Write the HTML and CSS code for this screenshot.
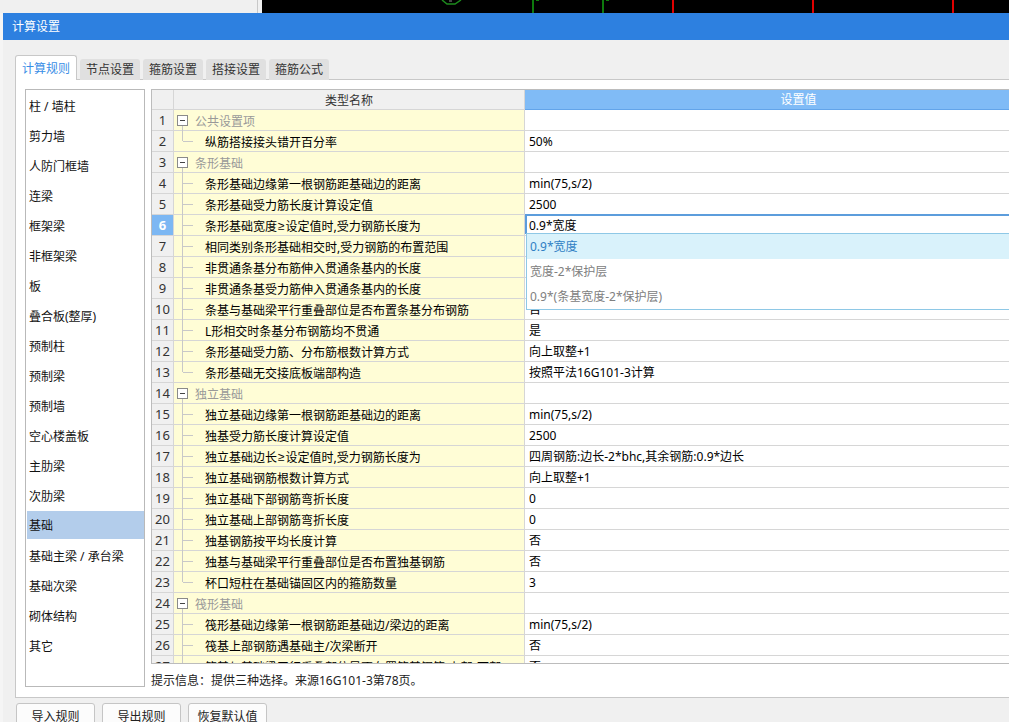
FILE: index.html
```html
<!DOCTYPE html>
<html lang="zh-CN">
<head>
<meta charset="utf-8">
<title>计算设置</title>
<link rel="stylesheet" href="styles.css">
</head>
<body>
<div class="topstrip">
  <div class="ts-left"></div>
  <div class="ts-gap"></div>
  <div class="ts-canvas">
    <svg width="747" height="13" viewBox="0 0 747 13">
      <polyline points="180,0 185,4 193,4 199,0" fill="none" stroke="#1d8a1d" stroke-width="1.5"/>
      <rect x="187" y="0" width="3" height="2" fill="#444"/>
      <rect x="270" y="0" width="2" height="13" fill="#0d7a0d"/>
      <rect x="274" y="0" width="3" height="1" fill="#0d7a0d"/>
      <rect x="340" y="0" width="2" height="13" fill="#0d7a0d"/>
      <rect x="344" y="0" width="3" height="1" fill="#0d7a0d"/>
      <rect x="410" y="0" width="2" height="13" fill="#e00000"/>
      <rect x="550" y="0" width="2" height="13" fill="#e00000"/>
      <rect x="690" y="0" width="2" height="13" fill="#e00000"/>
    </svg>
  </div>
</div>
<div class="main">
  <div class="leftstrip"></div>
  <div class="dialog">
    <div class="titlebar">计算设置</div>
    <div class="dbody">
      <div class="tabs">
        <div class="tab active">计算规则</div>
        <div class="tab">节点设置</div>
        <div class="tab">箍筋设置</div>
        <div class="tab">搭接设置</div>
        <div class="tab">箍筋公式</div>
      </div>
      <div class="panel">
        <ul class="cat-list">
          <li>柱 / 墙柱</li>
          <li>剪力墙</li>
          <li>人防门框墙</li>
          <li>连梁</li>
          <li>框架梁</li>
          <li>非框架梁</li>
          <li>板</li>
          <li>叠合板(整厚)</li>
          <li>预制柱</li>
          <li>预制梁</li>
          <li>预制墙</li>
          <li>空心楼盖板</li>
          <li>主肋梁</li>
          <li>次肋梁</li>
          <li class="sel">基础</li>
          <li>基础主梁 / 承台梁</li>
          <li>基础次梁</li>
          <li>砌体结构</li>
          <li>其它</li>
        </ul>
        <div class="right">
          <div class="grid">
            <div class="row head"><div class="num"></div><div class="name">类型名称</div><div class="val">设置值</div></div>
            <div class="row"><div class="num">1</div><div class="name g"><span class="box"></span>公共设置项</div><div class="val"></div></div>
            <div class="row"><div class="num">2</div><div class="name c last">纵筋搭接接头错开百分率</div><div class="val">50%</div></div>
            <div class="row"><div class="num">3</div><div class="name g"><span class="box"></span>条形基础</div><div class="val"></div></div>
            <div class="row"><div class="num">4</div><div class="name c">条形基础边缘第一根钢筋距基础边的距离</div><div class="val">min(75,s/2)</div></div>
            <div class="row"><div class="num">5</div><div class="name c">条形基础受力筋长度计算设定值</div><div class="val">2500</div></div>
            <div class="row"><div class="num cur">6</div><div class="name c">条形基础宽度<span class="ge">≥</span>设定值时,受力钢筋长度为</div><div class="val edit"><span class="editor"></span>0.9*宽度
              <div class="dropdown">
                <div class="opt hl">0.9*宽度</div>
                <div class="opt">宽度-2*保护层</div>
                <div class="opt">0.9*(条基宽度-2*保护层)</div>
              </div>
            </div></div>
            <div class="row"><div class="num">7</div><div class="name c">相同类别条形基础相交时,受力钢筋的布置范围</div><div class="val">十字相交</div></div>
            <div class="row"><div class="num">8</div><div class="name c">非贯通条基分布筋伸入贯通条基内的长度</div><div class="val">150</div></div>
            <div class="row"><div class="num">9</div><div class="name c">非贯通条基受力筋伸入贯通条基内的长度</div><div class="val">b/4</div></div>
            <div class="row"><div class="num">10</div><div class="name c">条基与基础梁平行重叠部位是否布置条基分布钢筋</div><div class="val">否</div></div>
            <div class="row"><div class="num">11</div><div class="name c">L形相交时条基分布钢筋均不贯通</div><div class="val">是</div></div>
            <div class="row"><div class="num">12</div><div class="name c">条形基础受力筋、分布筋根数计算方式</div><div class="val">向上取整+1</div></div>
            <div class="row"><div class="num">13</div><div class="name c last">条形基础无交接底板端部构造</div><div class="val">按照平法16G101-3计算</div></div>
            <div class="row"><div class="num">14</div><div class="name g"><span class="box"></span>独立基础</div><div class="val"></div></div>
            <div class="row"><div class="num">15</div><div class="name c">独立基础边缘第一根钢筋距基础边的距离</div><div class="val">min(75,s/2)</div></div>
            <div class="row"><div class="num">16</div><div class="name c">独基受力筋长度计算设定值</div><div class="val">2500</div></div>
            <div class="row"><div class="num">17</div><div class="name c">独立基础边长<span class="ge">≥</span>设定值时,受力钢筋长度为</div><div class="val">四周钢筋:边长-2*bhc,其余钢筋:0.9*边长</div></div>
            <div class="row"><div class="num">18</div><div class="name c">独立基础钢筋根数计算方式</div><div class="val">向上取整+1</div></div>
            <div class="row"><div class="num">19</div><div class="name c">独立基础下部钢筋弯折长度</div><div class="val">0</div></div>
            <div class="row"><div class="num">20</div><div class="name c">独立基础上部钢筋弯折长度</div><div class="val">0</div></div>
            <div class="row"><div class="num">21</div><div class="name c">独基钢筋按平均长度计算</div><div class="val">否</div></div>
            <div class="row"><div class="num">22</div><div class="name c">独基与基础梁平行重叠部位是否布置独基钢筋</div><div class="val">否</div></div>
            <div class="row"><div class="num">23</div><div class="name c last">杯口短柱在基础锚固区内的箍筋数量</div><div class="val">3</div></div>
            <div class="row"><div class="num">24</div><div class="name g"><span class="box"></span>筏形基础</div><div class="val"></div></div>
            <div class="row"><div class="num">25</div><div class="name c">筏形基础边缘第一根钢筋距基础边/梁边的距离</div><div class="val">min(75,s/2)</div></div>
            <div class="row"><div class="num">26</div><div class="name c">筏基上部钢筋遇基础主/次梁断开</div><div class="val">否</div></div>
            <div class="row"><div class="num">27</div><div class="name c">筏基与基础梁平行重叠部位是否布置筏基钢筋(上部/下部)</div><div class="val">否</div></div>
          </div>
          <div class="hint">提示信息：提供三种选择。来源16G101-3第78页。</div>
        </div>
      </div>
      <div class="buttons">
        <div class="btn">导入规则</div>
        <div class="btn">导出规则</div>
        <div class="btn">恢复默认值</div>
      </div>
    </div>
  </div>
</div>
</body>
</html>
```

FILE: styles.css
```css
* { box-sizing: border-box; margin: 0; padding: 0; }
html, body { width: 1009px; height: 722px; overflow: hidden; }
body {
  background: #f0f0f0;
  font-family: "Noto Sans", "Noto Sans CJK SC", sans-serif;
  font-size: 12px;
  color: #000;
}

/* background application strip */
.topstrip { display: flex; height: 13px; }
.ts-left { width: 258px; background: #f0f0f0; border-right: 1px solid #c8c8c8; }
.ts-gap { width: 4px; background: #f0f0f0; }
.ts-canvas { flex: 1; background: #000; overflow: hidden; }
.ts-canvas svg { display: block; }

.main { display: flex; height: 709px; }
.leftstrip { width: 3px; flex: none; background: #f5f5f5; }

/* dialog */
.dialog { flex: none; width: 1100px; background: #f0f0f0; }
.titlebar {
  height: 27px;
  background: #2d80e0;
  color: #fff;
  line-height: 27px;
  padding-left: 9px;
  font-size: 12px;
}
.dbody { padding: 15px 0 0 12px; }

.tabs { display: flex; align-items: flex-end; gap: 3px; height: 25px; }
.tab {
  width: 60px;
  height: 21px;
  background: #e0e0e0;
  border-radius: 3px 3px 0 0;
  text-align: center;
  line-height: 21px;
  color: #333;
}
.tab.active {
  width: 62px;
  height: 25px;
  background: #fff;
  border: 1px solid #c8c8c8;
  border-bottom: none;
  color: #3a8ee6;
  position: relative;
  z-index: 1;
  padding-top: 3px;
  line-height: 20px;
}

.panel {
  margin-top: -1px;
  height: 619px;
  border: 1px solid #c8c8c8;
  border-right: none;
  background: #fff;
  padding: 9px 0 0 9px;
  display: flex;
  gap: 6px;
  align-items: flex-start;
}

.cat-list {
  width: 120px;
  height: 598px;
  border: 1px solid #b9b9b9;
  list-style: none;
  background: #fff;
  flex: none;
}
.cat-list li {
  height: 30px;
  padding-top: 3px;
  line-height: 27px;
  padding-left: 3px;
  color: #111;
}
.cat-list li.sel {
  background: #b3cdeb;
  height: 28px;
  padding-top: 2px;
  line-height: 26px;
  margin: 1px 0 1px 1px;
  padding-left: 2px;
}

.right { flex: none; width: 922px; }
.grid {
  height: 575px;
  border: 1px solid #bcbcbc;
  border-right: none;
  overflow: hidden;
}
.row { display: grid; grid-template-columns: 22px 351px 1fr; height: 21px; }
.row > div { border-right: 1px solid #d6d6d6; border-bottom: 1px solid #d6d6d6; }
.num {
  background: #f0f0f0;
  text-align: center;
  font-size: 13px;
  line-height: 20px;
  color: #333;
}
.num.cur { background: #7cb7f3; color: #fff; font-weight: bold; }
.name {
  background: #fffdd6;
  position: relative;
  display: flex;
  align-items: center;
  white-space: nowrap;
  padding-top: 1px;
}
.ge { font-family: "Liberation Sans", sans-serif; margin: 0 1px; }
.val {
  background: #fff;
  padding-left: 4px;
  padding-top: 1px;
  line-height: 19px;
  position: relative;
  white-space: nowrap;
}

.head { height: 20px; }
.head .num, .head .name { background: #f0f0f0; }
.head .name { justify-content: center; color: #333; }
.head .val {
  background: #80bbf6;
  color: #fff;
  text-align: center;
  line-height: 19px;
  padding-left: 0;
  padding-top: 0;
  border-bottom-color: #62a4ea;
}

/* tree */
.name.g { color: #999; }
.box {
  width: 11px;
  height: 11px;
  border: 1px solid #8a8a8a;
  background: #fff;
  margin: 0 7px 0 3px;
  position: relative;
  flex: none;
}
.box::after {
  content: "";
  position: absolute;
  left: 2px;
  right: 2px;
  top: 4px;
  height: 1px;
  background: #444;
}
.name.g::before {
  content: "";
  position: absolute;
  left: 8px;
  top: 16px;
  bottom: -1px;
  width: 1px;
  background: #c8c8c8;
}
.name.c { padding-left: 31px; }
.name.c::before {
  content: "";
  position: absolute;
  left: 8px;
  top: -1px;
  bottom: -1px;
  width: 1px;
  background: #c8c8c8;
}
.name.c.last::before { bottom: auto; height: 11px; }
.name.c::after {
  content: "";
  position: absolute;
  left: 9px;
  top: 10px;
  width: 10px;
  height: 1px;
  background: #c8c8c8;
}

/* editing cell and dropdown */
.editor {
  position: absolute;
  left: 0;
  top: -1px;
  right: 0;
  bottom: 1px;
  border-top: 2px solid #5c9ddc;
  border-left: 2px solid #5c9ddc;
}
.dropdown {
  position: absolute;
  left: 1px;
  top: 18px;
  width: 560px;
  border: 1px solid #8ec8e6;
  background: #fff;
  z-index: 5;
}
.opt { height: 25px; line-height: 25px; padding-left: 3px; color: #808080; }
.opt.hl { background: #d9f2fb; color: #2f7fc4; }

.hint { margin-top: 7px; line-height: 20px; color: #222; }

.buttons { display: flex; gap: 7px; margin: 5px 0 0 1px; }
.btn {
  width: 79px;
  height: 28px;
  border: 1px solid #c5c5c5;
  border-radius: 3px;
  background: #fcfcfc;
  text-align: center;
  line-height: 26px;
  color: #222;
}
```
